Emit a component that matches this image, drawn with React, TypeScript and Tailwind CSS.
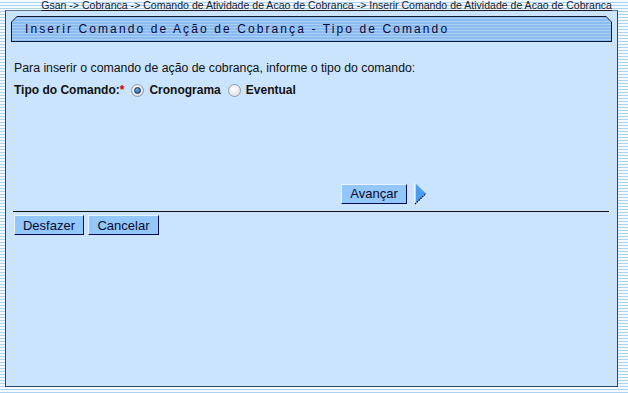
import React from "react";

function Radio({ checked }: { checked?: boolean }) {
  return (
    <span className="flex h-[13px] w-[13px] items-center justify-center rounded-full border border-[#8f9aa6] bg-[radial-gradient(circle_at_40%_35%,#ffffff,#d4d8dd)]">
      {checked && (
        <span className="h-[7px] w-[7px] rounded-full border border-[#163556] bg-[radial-gradient(circle_at_40%_35%,#6fb4ea,#164f8a)]" />
      )}
    </span>
  );
}

function Btn({ label, className = "" }: { label: string; className?: string }) {
  return (
    <button
      className={`flex h-[20px] items-center justify-center border border-t-[#e8f3ff] border-l-[#e8f3ff] border-r-[#0a0a5a] border-b-[#0a0a5a] bg-[#93c6f9] text-[13px] leading-none text-[#0b0b2e] ${className}`}
    >
      {label}
    </button>
  );
}

export default function App() {
  return (
    <div className="h-[393px] w-[628px] overflow-hidden bg-[repeating-linear-gradient(to_bottom,#f4faff_0px,#f4faff_2px,#a9d3f0_2px,#a9d3f0_3px)] font-['Liberation_Sans',Arial,sans-serif]">
      <div className="h-[10px] pr-[16px] text-right text-[10.55px] leading-[10px] text-[#1a1a2a] underline">
        Gsan -&gt; Cobranca -&gt; Comando de Atividade de Acao de Cobranca -&gt; Inserir Comando de Atividade de Acao de Cobranca
      </div>

      <div className="ml-[5px] h-[377px] w-[613px] border border-[#2f4564] border-t-[#5f7896] bg-[#cae4fd]">
        {/* title bar */}
        <div className="ml-[5px] mt-[5px] h-[26px] w-[601px] bg-[#10182e] [clip-path:polygon(6px_0,595px_0,601px_6px,601px_100%,0_100%,0_6px)]">
          <div className="flex h-full items-center bg-[repeating-linear-gradient(to_bottom,#8cbcef_0px,#8cbcef_2px,#a9cff7_2px,#a9cff7_3px)] pl-[14px] text-[12px] tracking-[2.1px] text-[#0a0a3c] [clip-path:polygon(6px_1px,595px_1px,600px_6px,600px_calc(100%-1px),1px_calc(100%-1px),1px_6px)]">
            Inserir Comando de Ação de Cobrança - Tipo de Comando
          </div>
        </div>

        <div className="pl-[8px] pt-[18px] text-[12px] text-[#111]">
          <div className="text-[12.3px] leading-[16px]">Para inserir o comando de ação de cobrança, informe o tipo do comando:</div>
          <div className="mt-[4px] flex h-[20px] items-center font-bold">
            <span>
              Tipo do Comando:<span className="text-[#d40000]">*</span>
            </span>
            <span className="ml-[7px]">
              <Radio checked />
            </span>
            <span className="ml-[5px]">Cronograma</span>
            <span className="ml-[7px]">
              <Radio />
            </span>
            <span className="ml-[5px]">Eventual</span>
          </div>
        </div>

        <div className="ml-[335px] mt-[82px] flex items-center">
          <Btn label="Avançar" className="w-[66px]" />
          <svg width="14" height="23" viewBox="0 0 14 23" className="ml-[7px]">
            <polygon points="1,1 12,11.5 1,22" fill="#4a9cf0" />
            <line x1="1" y1="1" x2="1" y2="22" stroke="#ffffff" strokeWidth="1.2" />
            <line x1="1" y1="22" x2="12" y2="11.5" stroke="#0a0a3c" strokeWidth="1.2" strokeDasharray="1.5 1" />
          </svg>
        </div>

        <div className="ml-[7px] mt-[6px] h-px w-[596px] bg-[#111]" />

        <div className="ml-[8px] mt-[3px] flex gap-[4px]">
          <Btn label="Desfazer" className="w-[70px]" />
          <Btn label="Cancelar" className="w-[71px]" />
        </div>
      </div>
    </div>
  );
}
